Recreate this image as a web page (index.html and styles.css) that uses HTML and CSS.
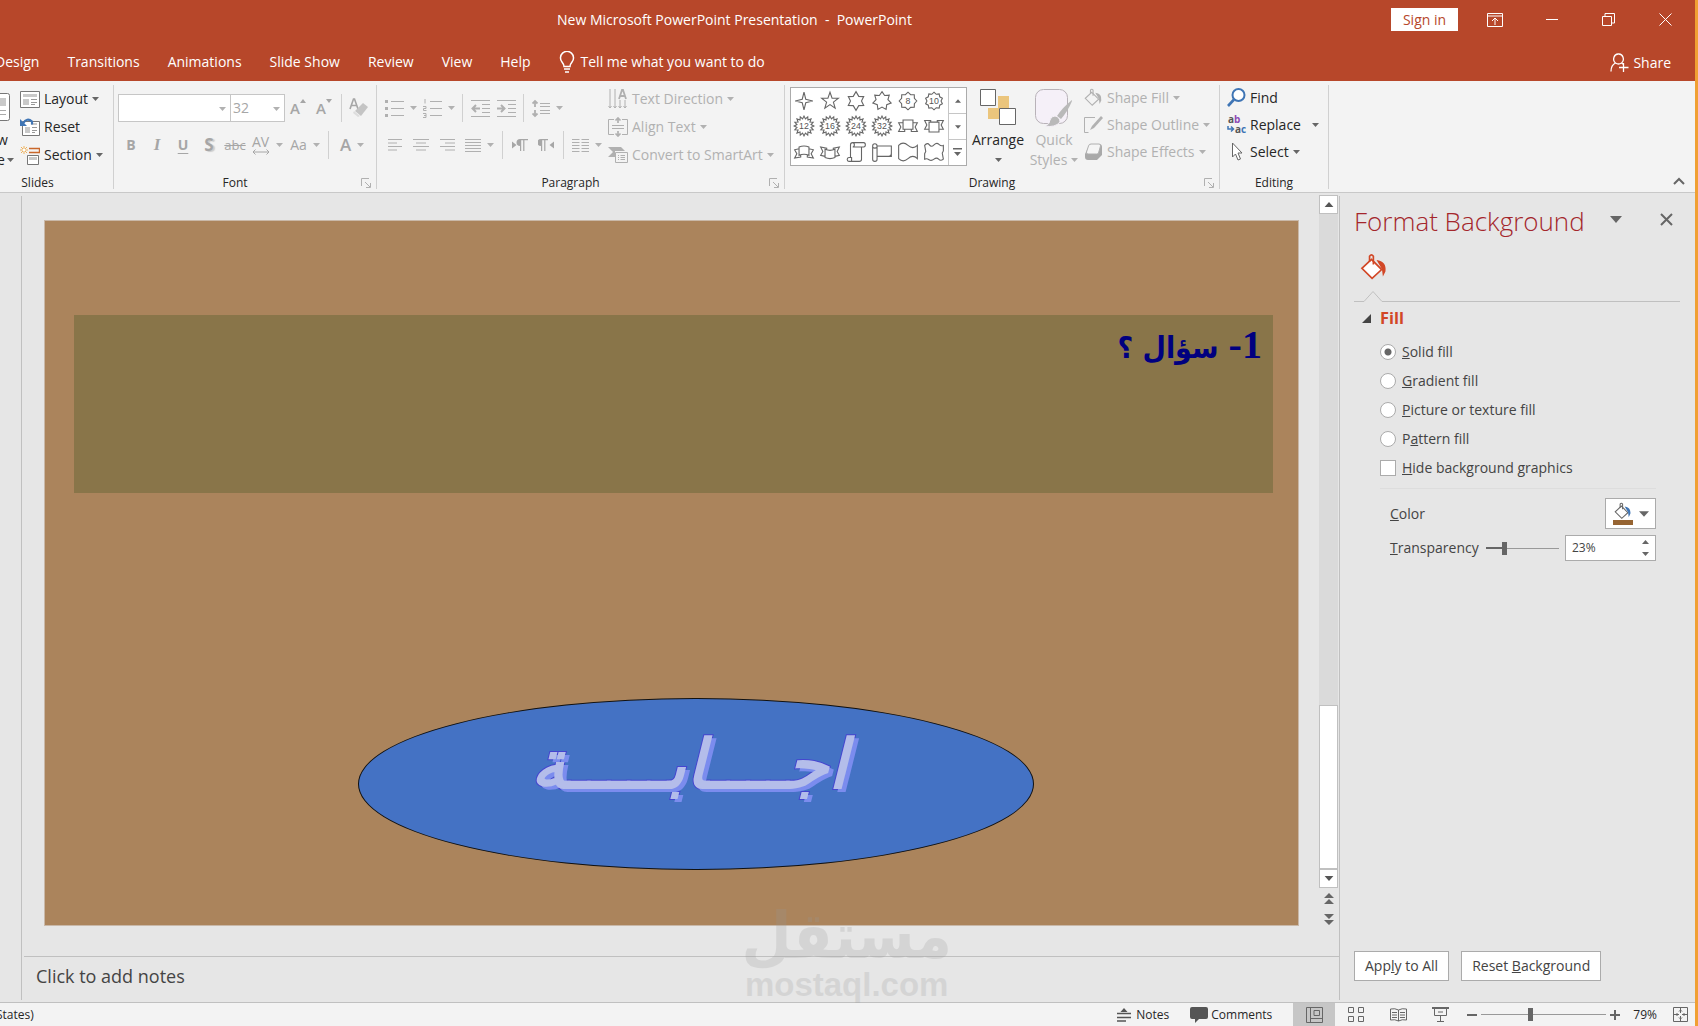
FILE: index.html
```html
<!DOCTYPE html>
<html lang="en">
<head>
<meta charset="utf-8">
<title>New Microsoft PowerPoint Presentation - PowerPoint</title>
<link rel="stylesheet" href="styles.css">
</head>
<body>
<svg class="defs" aria-hidden="true">
  <symbol id="caret" viewBox="0 0 7 4"><path d="M0 0h7L3.500 4z" fill="currentColor"/></symbol>
  <symbol id="launcher" viewBox="0 0 10 10"><path d="M.5 8V.5H8M4 4l5 5M9.500 5v4.500H5" fill="none" stroke="currentColor"/></symbol>
  <symbol id="bucket" viewBox="0 0 22 22"><path d="M9 5l8 8-7.500 7L1.500 12z" fill="var(--can, none)" stroke="currentColor" stroke-width="1.300"/><path d="M7.500 7V2.500q1.500-2 3 0V9" fill="none" stroke="currentColor" stroke-width="1.300"/><path d="M13 5.500q8 1 7 9l-2 4-.8-6z" fill="var(--paint, currentColor)"/></symbol>
  <symbol id="burst" viewBox="-10 -10 20 20"><path d="M9 0L6.400 1.300 8.300 3.400 5.400 3.600 6.400 6.400 3.600 5.400 3.400 8.300 1.300 6.400 0 9-1.300 6.400-3.400 8.300-3.600 5.400-6.400 6.400-5.400 3.600-8.300 3.400-6.400 1.300-9 0-6.400-1.300-8.300-3.400-5.400-3.600-6.400-6.400-3.600-5.400-3.400-8.300-1.300-6.400 0-9 1.300-6.400 3.400-8.300 3.600-5.400 6.400-6.400 5.400-3.600 8.300-3.400 6.400-1.300z"/></symbol>
</svg>

<div class="window">
  <header class="titlebar">
    <h1 class="doc-title">New Microsoft PowerPoint Presentation&nbsp; -&nbsp; PowerPoint</h1>
    <div class="window-tools">
      <button class="sign-in">Sign in</button>
      <button class="win-btn" aria-label="Ribbon display options"><svg width="16" height="14" viewBox="0 0 16 14"><path d="M.5.500h15v13H.500zM.5 3h15M8 12V5.500M5 8l3-3 3 3"/></svg></button>
      <button class="win-btn" aria-label="Minimize"><svg width="12" height="14" viewBox="0 0 12 14"><path d="M0 6.500h12"/></svg></button>
      <button class="win-btn" aria-label="Restore"><svg width="13" height="13" viewBox="0 0 13 13"><path d="M.5 3.500h9v9h-9zM3 3V.500h9.500V10H10"/></svg></button>
      <button class="win-btn" aria-label="Close"><svg width="13" height="13" viewBox="0 0 13 13"><path d="M.5.500l12 12M12.500.500l-12 12"/></svg></button>
    </div>
  </header>

  <nav class="tabs">
    <a href="#" class="tab tab-cut">Design</a>
    <a href="#" class="tab">Transitions</a>
    <a href="#" class="tab">Animations</a>
    <a href="#" class="tab">Slide Show</a>
    <a href="#" class="tab">Review</a>
    <a href="#" class="tab">View</a>
    <a href="#" class="tab">Help</a>
    <a href="#" class="tab tell-me"><svg width="16" height="23" viewBox="0 0 16 23"><path d="M5 15.500q0-2-2-4.500a6.500 6.500 0 1 1 10 0q-2 2.500-2 4.500zM5 18h6M6 21h4" fill="none" stroke="currentColor" stroke-width="1.500"/></svg>Tell me what you want to do</a>
    <button class="share"><svg width="19" height="20" viewBox="0 0 19 20"><path d="M8.500 1a4.500 5 0 0 1 3 9q-3 2-6 0a4.500 5 0 0 1 3-9M5.500 10Q1 12 1 18.500M11.500 10l2 1.500M13.500 10v9M9 14.500h9.500" fill="none" stroke="currentColor" stroke-width="1.300"/></svg>Share</button>
  </nav>

  <section class="ribbon" aria-label="Ribbon">
    <div class="group group-slides">
      <div class="group-body">
        <button class="new-slide" aria-label="New Slide"><svg width="10" height="28" viewBox="0 0 10 28"><path d="M0 .5h7.500q2 0 2 2v23q0 2-2 2H0" fill="#fff" stroke="#777"/><path d="M0 5h6v8H0z" fill="#c9c9c9"/><path d="M0 17.500h6M0 21.500h6" stroke="#aaa"/></svg><span>w</span><span>e<svg class="caret"><use href="#caret"/></svg></span></button>
        <div class="stack">
          <button class="cmd"><svg width="20" height="17" viewBox="0 0 20 17"><path d="M.5.500h19v16H.500z" fill="#fff" stroke="#777"/><path d="M3 3h14v3H3zM3 8h6v6H3z" fill="#c9c9c9"/><path d="M11 8.500h6M11 11.500h6M11 13.500h4" stroke="#999"/></svg>Layout<svg class="caret"><use href="#caret"/></svg></button>
          <button class="cmd"><svg width="20" height="18" viewBox="0 0 20 18"><path d="M2.500 3.500h17v14h-17z" fill="#fff" stroke="#777"/><path d="M5 9h5v6H5zM11 5h6v2h-6z" fill="#c9c9c9"/><path d="M12 9.500h5M12 12.500h5M12 14.500h3" stroke="#999"/><path d="M3 5.500Q7-1 12 3.500v3" fill="none" stroke="#3f75b5" stroke-width="2.200"/><path d="M0 1v7h7z" fill="#3f75b5"/></svg>Reset</button>
          <button class="cmd"><svg width="20" height="19" viewBox="0 0 20 19"><path d="M9 2.500h10.500v4H9" fill="none" stroke="#c9672b" stroke-width="1.400"/><path d="M4 0v8M0 4h8M1 1l6 6M7 1L1 7" stroke="#efb25a"/><circle cx="4" cy="4" r="1.300" fill="#fff"/><path d="M7.500 9.500h11v9h-11z" fill="#fff" stroke="#777"/><path d="M9 11h8v3H9z" fill="#c9c9c9"/></svg>Section<svg class="caret"><use href="#caret"/></svg></button>
        </div>
      </div>
      <div class="group-label">Slides</div>
    </div>

    <div class="group group-font">
      <div class="group-body rows">
        <div class="row">
          <label class="combo combo-name"><select aria-label="Font"><option></option></select><svg class="caret"><use href="#caret"/></svg></label>
          <label class="combo combo-size"><select aria-label="Font size"><option>32</option></select><svg class="caret"><use href="#caret"/></svg></label>
          <button class="tool grow" aria-label="Increase font size"><span>A</span><svg width="6" height="4" viewBox="0 0 6 4"><path d="M0 4l3-4 3 4z"/></svg></button>
          <button class="tool grow" aria-label="Decrease font size"><span>A</span><svg width="6" height="4" viewBox="0 0 6 4"><path d="M0 0h6L3 4z"/></svg></button>
          <i class="sep"></i>
          <button class="tool" aria-label="Clear formatting"><svg width="20" height="20" viewBox="0 0 20 20"><path d="M1 11L4.500 1h1L9 11M2.500 7.500h5" fill="none" stroke="#a6a6a6" stroke-width="1.600"/><path d="M14 5l5 4-7 9-6-5z" fill="#c4c4c4"/><path d="M5 13l6 5-2 1-5-4z" fill="#ddd"/></svg></button>
        </div>
        <div class="row">
          <button class="tool"><b>B</b></button>
          <button class="tool"><i class="serif-i">I</i></button>
          <button class="tool"><b class="under">U</b></button>
          <button class="tool"><b class="shadow">S</b></button>
          <button class="tool"><s>abc</s></button>
          <button class="split spacing"><span>AV<svg width="18" height="6" viewBox="0 0 18 6"><path d="M1 3h16M3.500.500L1 3l2.500 2.500M14.500.500L17 3l-2.500 2.500" fill="none" stroke="currentColor"/></svg></span><svg class="caret"><use href="#caret"/></svg></button>
          <button class="split"><span>Aa</span><svg class="caret"><use href="#caret"/></svg></button>
          <i class="sep"></i>
          <button class="split color"><b>A</b><svg class="caret"><use href="#caret"/></svg></button>
        </div>
      </div>
      <div class="group-label">Font<button class="launch" aria-label="Font settings"><svg width="10" height="10"><use href="#launcher"/></svg></button></div>
    </div>

    <div class="group group-paragraph">
      <div class="group-body">
        <div class="rows">
          <div class="row">
            <button class="split" aria-label="Bullets"><svg class="g" width="19" height="19" viewBox="0 0 19 19"><path d="M6 2.500h13M6 9.500h13M6 16.500h13"/><path d="M0 2.500h3M0 9.500h3M0 16.500h3" stroke-width="3"/></svg><svg class="caret"><use href="#caret"/></svg></button>
            <button class="split" aria-label="Numbering"><svg class="g" width="19" height="19" viewBox="0 0 19 19"><path d="M7 2.500h12M7 9.500h12M7 16.500h12M2 0v4.500M0 7.500h3v2H.500v2H3.500M0 14.500h3v4H0M1 16.500h2"/></svg><svg class="caret"><use href="#caret"/></svg></button>
            <i class="sep"></i>
            <button class="tool" aria-label="Decrease list level"><svg class="g" width="19" height="17" viewBox="0 0 19 17"><path d="M0 .5h19M11 4.500h8M11 8.500h8M11 12.500h8M0 16.500h19"/><path d="M9 8.500H2M5 5L1.500 8.500 5 12" stroke-width="2"/></svg></button>
            <button class="tool" aria-label="Increase list level"><svg class="g" width="19" height="17" viewBox="0 0 19 17"><path d="M0 .5h19M11 4.500h8M11 8.500h8M11 12.500h8M0 16.500h19"/><path d="M0 8.500h7M4 5l3.500 3.500L4 12" stroke-width="2"/></svg></button>
            <i class="sep"></i>
            <button class="split" aria-label="Line spacing"><svg class="g" width="18" height="19" viewBox="0 0 18 19"><path d="M8 4.500h10M8 7.500h10M8 11.500h10M8 14.500h10"/><path d="M3 2v6M3 11v6M.5 4.500L3 2l2.500 2.500M.5 14.500L3 17l2.500-2.500" stroke-width="1.800"/></svg><svg class="caret"><use href="#caret"/></svg></button>
          </div>
          <div class="row">
            <button class="tool" aria-label="Align left"><svg class="g" width="15" height="12" viewBox="0 0 15 12"><path d="M0 .5h14M0 4h9M0 7.500h14M0 11h9"/></svg></button>
            <button class="tool" aria-label="Center"><svg class="g" width="16" height="12" viewBox="0 0 16 12"><path d="M0 .5h16M3 4h10M0 7.500h16M3 11h10"/></svg></button>
            <button class="tool" aria-label="Align right"><svg class="g" width="15" height="12" viewBox="0 0 15 12"><path d="M0 .5h15M5 4h10M0 7.500h15M5 11h10"/></svg></button>
            <button class="split" aria-label="Justify"><svg class="g" width="16" height="13" viewBox="0 0 16 13"><path d="M0 .5h16M0 3.500h16M0 6.500h16M0 9.500h16M0 12.500h16"/></svg><svg class="caret"><use href="#caret"/></svg></button>
            <i class="sep"></i>
            <button class="tool" aria-label="Left to right"><svg width="16" height="13" viewBox="0 0 16 13"><path d="M0 2.500v7L4.500 6zM8 0a3 3 0 0 0 0 7v5h1.200V1.200h2V12h1.200V1.200H16V0z" fill="currentColor"/></svg></button>
            <button class="tool" aria-label="Right to left"><svg width="16" height="13" viewBox="0 0 16 13"><path d="M16 2.500v7L11.500 6zM3 0a3 3 0 0 0 0 7v5h1.200V1.200h2V12h1.200V1.200H10V0z" fill="currentColor"/></svg></button>
            <i class="sep"></i>
            <button class="split" aria-label="Columns"><svg class="g" width="17" height="13" viewBox="0 0 17 13"><path d="M0 .5h7.500M0 3.500h7.500M0 6.500h7.500M0 9.500h7.500M0 12.500h7.500M9.500.500H17M9.500 3.500H17M9.500 6.500H17M9.500 9.500H17M9.500 12.500H17"/></svg><svg class="caret"><use href="#caret"/></svg></button>
          </div>
        </div>
        <div class="stack">
          <button class="cmd off"><svg class="g" width="20" height="20" viewBox="0 0 20 20"><path d="M2 0v19M7 0v19M12 11v8M17 11v8M.5 17L2 19l1.500-2M5.500 17L7 19l1.500-2M10.500 17l1.500 2 1.500-2M15.500 17l1.500 2 1.500-2"/><path d="M11 10l3-9h1l3 9M12 7h5" stroke-width="1.800"/></svg>Text Direction<svg class="caret"><use href="#caret"/></svg></button>
          <button class="cmd off"><svg class="g" width="20" height="20" viewBox="0 0 20 20"><path d="M6 2.500H.500v15H6M14 2.500h5.500v15H14M4 8.500h12M4 11.500h12"/><path d="M10 6V1M7.500 3.500L10 1l2.500 2.500M10 14v5M7.500 16.500L10 19l2.500-2.500" stroke-width="1.700"/></svg>Align Text<svg class="caret"><use href="#caret"/></svg></button>
          <button class="cmd off"><svg class="g" width="20" height="16" viewBox="0 0 20 16"><path d="M0 0h13l4 4-4 0H7v6H0l5-5z" fill="#b0b0b0" stroke="none"/><path d="M7.500 5.500h12v10h-12z" fill="#f3f3f3"/><path d="M10 8.500h1M12.500 8.500H17M10 10.500h1M12.500 10.500H17M10 12.500h1M12.500 12.500H17"/></svg>Convert to SmartArt<svg class="caret"><use href="#caret"/></svg></button>
        </div>
      </div>
      <div class="group-label">Paragraph<button class="launch" aria-label="Paragraph settings"><svg width="10" height="10"><use href="#launcher"/></svg></button></div>
    </div>

    <div class="group group-drawing">
      <div class="group-body">
        <div class="gallery">
          <div class="shapes">
            <svg viewBox="-10 -10 20 20"><path d="M0-8L1.600-1.600 8 0 1.600 1.600 0 8-1.600 1.600-8 0-1.600-1.600z"/></svg>
            <svg viewBox="-10 -10 20 20"><path d="M0-8L1.900-2.600 7.600-2.500 3.100 1 4.700 6.500 0 3.300-4.700 6.500-3.100 1-7.600-2.500-1.900-2.600z"/></svg>
            <svg viewBox="-10 -10 20 20"><path d="M0-8.500L2.500-4.200 7-4 5 0 7 4 2.500 4.200 0 8.500-2.500 4.200-7 4-5 0-7-4-2.500-4.200z"/></svg>
            <svg viewBox="-10 -10 20 20"><path d="M0-8.500L2.400-5 6.600-5.300 5.400-1.200 8.300 1.900 4.300 3.400 3.700 7.700 0 5.500-3.700 7.700-4.300 3.400-8.300 1.900-5.400-1.200-6.600-5.300-2.400-5z"/></svg>
            <svg viewBox="-10 -10 20 20"><path d="M8 0L5.800 2.400 5.700 5.700 2.400 5.800 0 8-2.400 5.800-5.700 5.700-5.800 2.400-8 0-5.800-2.400-5.700-5.700-2.400-5.800 0-8 2.400-5.800 5.700-5.700 5.800-2.400z"/><text y="3">8</text></svg>
            <svg viewBox="-10 -10 20 20"><path d="M0-8L2-6.100 4.700-6.500 5.200-3.800 7.600-2.500 6.400 0 7.600 2.500 5.200 3.800 4.700 6.500 2 6.100 0 8-2 6.100-4.700 6.500-5.200 3.800-7.600 2.500-6.400 0-7.600-2.500-5.200-3.800-4.700-6.500-2-6.100z"/><text y="3">10</text></svg>
            <svg viewBox="-10 -10 20 20"><use href="#burst" x="-10" y="-10" width="20" height="20"/><text y="3">12</text></svg>
            <svg viewBox="-10 -10 20 20"><use href="#burst" x="-10" y="-10" width="20" height="20"/><text y="3">16</text></svg>
            <svg viewBox="-10 -10 20 20"><use href="#burst" x="-10" y="-10" width="20" height="20"/><text y="3">24</text></svg>
            <svg viewBox="-10 -10 20 20"><use href="#burst" x="-10" y="-10" width="20" height="20"/><text y="3">32</text></svg>
            <svg viewBox="-10 -10 20 20"><path d="M-4.500-5.500h9V3h-9zM-4.500-3h-4l2 4-2 4h5.500V3M4.500-3h4l-2 4 2 4H3V3"/></svg>
            <svg viewBox="-10 -10 20 20"><path d="M-4.500-3.500h9v9h-9zM-4.500 3h-4l2-4-2-4h5.500v1.500M4.500 3h4l-2-4 2-4H3v1.500"/></svg>
            <svg viewBox="-10 -10 20 20"><path d="M-4.500-4.500q4.500-2 9 0V3q-4.500-2-9 0zM-4.500-3l-4 1 2 3.500-2 4 5.500-1V2.500M4.500-3l4 1-2 3.500 2 4L3 4.500V2.500"/></svg>
            <svg viewBox="-10 -10 20 20"><path d="M-4.500-2.500q4.500 2 9 0V5q-4.500 2-9 0zM-4.500 4l-4-1 2-3.500-2-4 5.500 1V-2M4.500 4l4-1-2-3.500 2-4L3-3.500V-2"/></svg>
            <svg viewBox="-10 -10 20 20"><path d="M-5 5V-6.500q0-2 2-2H7q1.500 0 1.500 2T7-4.500H5V6.500q0 2-2 2h-9.500q-1.500 0-1.500-1.700T-6.500 5H-4v3M-3-8.500q1.500 0 1.500 2T-3-4.500h8"/></svg>
            <svg viewBox="-10 -10 20 20"><path d="M-4.500-5.500H8.500V4H-4.500M-8.500-5.500q0-2 2-2t2 2v12q0 2-2 2t-2-2zM-8.500-5q0 1.500 2 1.500t2-1.500M6 4q2.500 0 2.500-3"/></svg>
            <svg viewBox="-10 -10 20 20"><path d="M-8.500-6q4-4 8.500 0t8.500 0V6Q4.500 2 0 6t-8.500 0z"/></svg>
            <svg viewBox="-10 -10 20 20"><path d="M-8.500-6Q-6-9-4.200-6.500T0-6.500 4.500-7 8.500-6V-1l-1 2 1 5.500Q6 8.500 4.200 6.500T0 6.500-4.500 7-8.500 6.500v-5l1-2z"/></svg>
          </div>
          <div class="gallery-nav">
            <button aria-label="Previous row"><svg class="caret flip"><use href="#caret"/></svg></button>
            <button aria-label="Next row"><svg class="caret"><use href="#caret"/></svg></button>
            <button aria-label="More shapes"><svg width="9" height="9" viewBox="0 0 9 9"><path d="M0 0h9v1.500H0zM1 4h7L4.500 8z" fill="currentColor"/></svg></button>
          </div>
        </div>
        <button class="big"><svg width="36" height="36" viewBox="0 0 36 36"><path d="M18 7h11v12H18zM8 19h11v11H8z" fill="#ebc57c"/><path d="M.5.500h15v16H.500zM19.500 19.500h16v16h-16z" fill="#fff" stroke="#666"/></svg><span>Arrange</span><svg class="caret"><use href="#caret"/></svg></button>
        <button class="big off quick"><svg width="38" height="38" viewBox="0 0 38 38"><rect x=".5" y=".5" width="32" height="34" rx="8" fill="#f5f0f8" stroke="#b8b2b8"/><path d="M37 11q-10 8-15 16l4 3q7-8 11-18z" fill="#b9b9b9"/><path d="M20 27q5 1 5 6-5 6-15 4 5-2 5-6 1-4 5-4z" fill="#b9b9b9" stroke="#f5f0f8"/></svg><span>Quick</span><span>Styles<svg class="caret"><use href="#caret"/></svg></span></button>
        <div class="stack shape-cmds">
          <button class="cmd off"><svg width="19" height="19"><use href="#bucket"/></svg>Shape Fill<svg class="caret"><use href="#caret"/></svg></button>
          <button class="cmd off"><svg width="19" height="17" viewBox="0 0 19 17"><path d="M11 1.500H.500v15h4" fill="none" stroke="currentColor"/><path d="M17 0l2 2-9 10-4 2 2-4z" fill="currentColor"/></svg>Shape Outline<svg class="caret"><use href="#caret"/></svg></button>
          <button class="cmd off"><svg width="19" height="18" viewBox="0 0 19 18"><path d="M6 1h9q3 0 3 3v8l-5 5H4q-3 0-3-3v-3z" fill="#a9a9a9"/><path d="M7 1h8q2 0 1.500 2l-2 7q-.5 1-2 1H4q-2 0-1.500-2l2-6Q5 1 7 1z" fill="#f5f5f5" stroke="#b0b0b0"/></svg>Shape Effects<svg class="caret"><use href="#caret"/></svg></button>
        </div>
      </div>
      <div class="group-label">Drawing<button class="launch" aria-label="Drawing settings"><svg width="10" height="10"><use href="#launcher"/></svg></button></div>
    </div>

    <div class="group group-editing">
      <div class="group-body">
        <div class="stack">
          <button class="cmd"><svg width="19" height="19" viewBox="0 0 19 19"><circle cx="11.500" cy="7" r="6" fill="#fff" stroke="#3f75b5" stroke-width="2"/><path d="M7 11.500L1 18" stroke="#3f75b5" stroke-width="2.600"/></svg>Find</button>
          <button class="cmd replace"><svg width="20" height="20" viewBox="0 0 20 20"><text x="1" y="8" fill="#555">a<tspan fill="#8d4bb5">b</tspan></text><text x="8" y="18" fill="#555">a<tspan fill="#3f75b5">c</tspan></text><path d="M1 11v3h5M4 11.500L6.500 14 4 16.500" fill="none" stroke="#3f75b5" stroke-width="1.500"/></svg>Replace<svg class="caret"><use href="#caret"/></svg></button>
          <button class="cmd"><svg width="19" height="19" viewBox="0 0 19 19"><path d="M5.500 1v14l3-3 2.500 6 2.500-1-2.500-6h4z" fill="#fff" stroke="#666"/></svg>Select<svg class="caret"><use href="#caret"/></svg></button>
        </div>
      </div>
      <div class="group-label">Editing</div>
    </div>
    <button class="collapse" aria-label="Collapse the ribbon"><svg width="12" height="8" viewBox="0 0 12 8"><path d="M1 7l5-5 5 5" fill="none" stroke="#666" stroke-width="2"/></svg></button>
  </section>

  <main class="workspace">
    <aside class="thumbs"></aside>
    <div class="editor">
      <div class="stage">
        <div class="slide">
          <div class="question" dir="rtl" lang="ar">1- <span>سؤال ؟</span></div>
          <div class="answer" dir="rtl" lang="ar"><span>اجــــابـــــة</span></div>
        </div>
        <div class="scroll">
          <button class="scroll-btn" aria-label="Scroll up"><svg width="10" height="5" viewBox="0 0 7 4"><path d="M0 4h7L3.500 0z" fill="#555"/></svg></button>
          <div class="track"><div class="thumb"></div></div>
          <button class="scroll-btn" aria-label="Scroll down"><svg width="10" height="5"><use href="#caret"/></svg></button>
          <button class="page-btn" aria-label="Previous slide"><svg width="10" height="11" viewBox="0 0 10 11"><path d="M0 5l5-5 5 5zM0 11l5-5 5 5z" fill="#666"/></svg></button>
          <button class="page-btn" aria-label="Next slide"><svg width="10" height="11" viewBox="0 0 10 11"><path d="M0 0h10L5 5zM0 6h10l-5 5z" fill="#666"/></svg></button>
        </div>
      </div>
      <div class="notes">Click to add notes</div>
      <div class="watermark"><span class="mark-ar" lang="ar" dir="rtl">مستقل</span><span class="mark-en">mostaql.com</span></div>
    </div>

    <aside class="pane">
      <div class="pane-head">
        <h2>Format Background</h2>
        <button class="pane-menu" aria-label="Task pane options"><svg width="12" height="7"><use href="#caret"/></svg></button>
        <button class="pane-close" aria-label="Close"><svg width="13" height="13" viewBox="0 0 13 13"><path d="M1 1l11 11M12 1L1 12" stroke="#666" stroke-width="2"/></svg></button>
      </div>
      <button class="pane-tab" aria-label="Fill"><svg width="28" height="28"><use href="#bucket"/></svg></button>
      <div class="pane-rule"><i></i><svg width="18" height="11" viewBox="0 0 18 11"><path d="M0 10.500L9 .5l9 10" fill="none" stroke="#c0c0c0"/></svg><i></i></div>
      <h3><svg width="9" height="9" viewBox="0 0 9 9"><path d="M9 0v9H0z" fill="#444"/></svg>Fill</h3>
      <form class="fill-form">
        <label class="opt"><input type="radio" name="fill" checked><span><u>S</u>olid fill</span></label>
        <label class="opt"><input type="radio" name="fill"><span><u>G</u>radient fill</span></label>
        <label class="opt"><input type="radio" name="fill"><span><u>P</u>icture or texture fill</span></label>
        <label class="opt"><input type="radio" name="fill"><span>P<u>a</u>ttern fill</span></label>
        <label class="opt"><input type="checkbox"><span><u>H</u>ide background graphics</span></label>
        <div class="field color-field"><label for="color"><u>C</u>olor</label>
          <button type="button" id="color" class="color-btn" aria-label="Color"><span><svg width="20" height="18" viewBox="0 0 22 22"><use href="#bucket"/></svg></span><svg width="10" height="6"><use href="#caret"/></svg></button></div>
        <div class="field"><label for="alpha"><u>T</u>ransparency</label>
          <input type="range" id="alpha" min="0" max="100" value="23">
          <span class="spin"><input type="text" value="23%" aria-label="Transparency value"><span><button type="button" aria-label="Increase"><svg class="caret flip"><use href="#caret"/></svg></button><button type="button" aria-label="Decrease"><svg class="caret"><use href="#caret"/></svg></button></span></span></div>
      </form>
      <div class="pane-actions"><button>App<u>l</u>y to All</button><button>Reset <u>B</u>ackground</button></div>
    </aside>
  </main>

  <footer class="status">
    <span class="language">States)</span>
    <button class="status-text"><svg width="14" height="15" viewBox="0 0 14 15"><path d="M3.500 5L7 1l3.500 4z" fill="#555"/><path d="M0 6.500h14M0 10.500h14M0 14h9" stroke="#555" stroke-width="1.300"/></svg>Notes</button>
    <button class="status-text comments"><svg width="18" height="16" viewBox="0 0 18 16"><path d="M2 0h14q2 0 2 2v8q0 2-2 2H9l-4 4v-4H2q-2 0-2-2V2q0-2 2-2z" fill="#555"/></svg>Comments</button>
    <button class="view active" aria-label="Normal"><svg width="17" height="16" viewBox="0 0 17 16"><path d="M.5.500h16v15H.500zM4.500.500v15M4.500 11.500h12M8 3.500h5.500v5H8z"/></svg></button>
    <button class="view" aria-label="Slide sorter"><svg width="16" height="15" viewBox="0 0 16 15"><path d="M.5.500h5v5h-5zM10.500.500h5v5h-5zM.5 9.500h5v5h-5zM10.500 9.500h5v5h-5z"/></svg></button>
    <button class="view" aria-label="Reading view"><svg width="17" height="14" viewBox="0 0 17 14"><path d="M8.500 2Q5 0 .5 1v11q4.500-1 8 1 3.500-2 8-1V1Q12 0 8.500 2v11M2 4.500h5M2 7h5M2 9.500h5M10 4.500h5M10 7h5M10 9.500h5"/></svg></button>
    <button class="view" aria-label="Slide show"><svg width="17" height="15" viewBox="0 0 17 15"><path d="M0 1h17" stroke-width="2"/><path d="M2.500 1v7.500h12V1M6 5h5M8.500 8.500V14M5 14.500h7"/></svg></button>
    <button class="zoom-step" aria-label="Zoom out"><svg width="10" height="10" viewBox="0 0 10 10"><path d="M0 5h10"/></svg></button>
    <input class="zoom" type="range" min="0" max="100" value="39" aria-label="Zoom">
    <button class="zoom-step" aria-label="Zoom in"><svg width="10" height="10" viewBox="0 0 10 10"><path d="M0 5h10M5 0v10"/></svg></button>
    <button class="percent">79%</button>
    <button class="fit" aria-label="Fit slide to window"><svg width="15" height="15" viewBox="0 0 15 15"><path d="M.5.500h14v14H.500zM7.500 1v5M7.500 9v5M1 7.500h5M9 7.500h5M6 4.500L7.500 3 9 4.500M6 10.500L7.500 12 9 10.500M4.500 6L3 7.500 4.500 9M10.500 6L12 7.500 10.500 9"/></svg></button>
  </footer>
</div>
</body>
</html>
```

FILE: styles.css
```css
* { box-sizing: border-box; }
body {
  margin: 0;
  font: 14px/20px "Open Sans", "Noto Sans", sans-serif;
  color: #262626;
  background: #e6e6e6;
}
button, input, select { font: inherit; color: inherit; }
button { padding: 0; border: 0; background: none; }
svg { flex: none; display: block; }
h1, h2, h3 { margin: 0; font-weight: 400; }
.defs { display: none; }

.window {
  display: flex;
  flex-direction: column;
  height: 100vh;
  overflow: hidden;
  border-right: 3px solid #f0a033;
}

/* Title bar and tabs */
.titlebar {
  display: grid;
  grid-template-columns: 1fr;
  align-items: center;
  height: 39px;
  flex: none;
  background: #b7472a;
  color: #fff;
}
.titlebar > * { grid-area: 1 / 1; }
.doc-title { font-size: 14px; text-align: center; padding-right: 226px; }
.window-tools { justify-self: end; display: flex; align-items: center; }
.sign-in { width: 67px; height: 23px; margin-right: 8px; background: #fff; color: #b7472a; }
.win-btn { display: grid; place-items: center; width: 57px; height: 38px; }
.win-btn:last-child { margin-right: 1px; }
.win-btn svg { fill: none; stroke: #fff; }
.tabs { display: flex; flex: none; align-items: center; height: 42px; gap: 28px; padding-top: 4px; background: #b7472a; color: #fff; }
.tab { color: inherit; text-decoration: none; white-space: nowrap; }
.tab-cut { margin-left: -5px; }
.tell-me { display: flex; align-items: center; gap: 6px; }
.share { display: flex; align-items: center; gap: 4px; margin: 2px 24px 0 auto; }

/* Ribbon */
.ribbon { display: flex; flex: none; height: 112px; padding: 4px 0 3px; background: #f3f3f3; border-bottom: 1px solid #c8c8c8; }
.group { display: flex; flex-direction: column; flex: none; border-right: 1px solid #d0d0d0; }
.group-slides { width: 114px; }
.group-font { width: 263px; }
.group-paragraph { width: 408px; }
.group-drawing { width: 435px; }
.group-editing { width: 109px; }
.group-body { display: flex; flex: 1; min-height: 0; }
.group-label { position: relative; height: 14px; line-height: 16px; padding-right: 20px; font-size: 12px; text-align: center; }
.group-slides .group-label { padding-right: 38px; }
.group-editing .group-label { padding-right: 0; }
.launch { position: absolute; right: 5px; top: 3px; color: #b0b0b0; }
.caret { width: 7px; height: 4px; color: #666; }
.flip { transform: rotate(180deg); }
.off, .off .caret { color: #b1b1b1; }
.stack { display: flex; flex-direction: column; }
.cmd { display: flex; align-items: center; gap: 4px; height: 28px; white-space: nowrap; }
.new-slide { width: 20px; padding-top: 8px; display: flex; flex-direction: column; align-items: flex-start; }
.new-slide span { display: flex; align-items: center; gap: 2px; margin-left: -3px; }
.new-slide span:first-of-type { margin-top: 9px; }

.rows { display: flex; flex-direction: column; gap: 11px; padding-top: 10px; }
.row { display: flex; align-items: center; height: 26px; color: #a6a6a6; }
.row .caret { color: #b1b1b1; }
.group-font .rows { padding-left: 4px; }
.combo { position: relative; height: 28px; border: 1px solid #c6c6c6; background: #fff; }
.combo select { width: 100%; height: 100%; padding: 0 2px; border: 0; background: none; appearance: none; }
.combo .caret { position: absolute; right: 4px; top: 12px; pointer-events: none; }
.combo-name { width: 113px; }
.combo-size { width: 55px; margin-left: -1px; }
.tool { display: flex; align-items: center; justify-content: center; width: 26px; height: 26px; flex: none; }
.grow { align-items: flex-start; font-weight: 600; }
.grow span { line-height: 26px; font-size: 15px; }
.grow svg { fill: #a6a6a6; margin-top: 4px; }
.split { display: flex; align-items: center; justify-content: center; gap: 6px; width: 38px; height: 26px; flex: none; }
.sep { width: 1px; height: 28px; background: #d0d0d0; margin: 0 4px; }
.serif-i { font: italic bold 17px "Liberation Serif", serif; }
.under { text-decoration: underline; text-underline-offset: 3px; }
.shadow { font-size: 17px; text-shadow: 2px 1px 1px #ccc; }
.tool s { font-size: 13px; }
.spacing span { line-height: 14px; }
.color b { font-size: 17px; font-weight: 600; }
.g { fill: none; stroke: #b0b0b0; }
.group-paragraph .rows { width: 231px; padding-left: 5px; }

.gallery { display: flex; width: 177px; height: 79px; margin: 2px 0 0 5px; background: #fff; border: 1px solid #ababab; }
.shapes { display: grid; grid-template-columns: repeat(6, 26px); flex: 1; }
.shapes svg { width: 22px; height: 22px; place-self: center; fill: none; stroke: #666; }
.shapes text { font: 8px "Liberation Sans", sans-serif; text-anchor: middle; fill: #555; stroke: none; }
.gallery-nav { display: flex; flex-direction: column; width: 18px; border-left: 1px solid #c6c6c6; }
.gallery-nav button { display: grid; place-items: center; flex: 1; color: #666; }
.gallery-nav button + button { border-top: 1px solid #c6c6c6; }
.gallery-nav .caret { width: 6px; }
.big { display: flex; flex-direction: column; align-items: center; width: 62px; padding-top: 4px; }
.big > span { display: flex; align-items: center; gap: 4px; }
.big > svg + span { margin-top: 5px; }
.big > .caret { margin-top: 8px; }
.quick { width: 50px; }
.quick > svg + span { margin-top: 3px; }
.shape-cmds { margin-left: 5px; }
.group-drawing .cmd, .group-editing .cmd { height: 27px; }
.group-drawing .stack, .group-editing .stack { margin-top: -1px; }
.group-editing .stack { padding-left: 7px; }
.replace { gap: 3px; }
.replace > .caret { margin-left: 8px; }
.replace text { font: bold 10px "Open Sans", sans-serif; }
.collapse { margin: auto 10px 4px auto; }

/* Workspace */
.workspace { display: flex; flex: 1; min-height: 0; background: #e6e6e6; }
.thumbs { width: 22px; flex: none; margin: 3px 0 2px; border-right: 1px solid #c0c0c0; }
.editor { position: relative; display: flex; flex-direction: column; flex: 1; min-width: 0; }
.stage { display: flex; flex: 1; min-height: 0; padding: 2px 1px 0 22px; gap: 20px; }
.slide { position: relative; flex: 1; margin: 25px 0 30px; background: #ab845c; border: 1px solid #c9b8a8; }
.question {
  position: absolute;
  left: 2.3%; top: 13.3%; width: 95.7%; height: 25.4%;
  padding: 6px 11px;
  background: #897549;
  color: #000080;
  font: bold 40px/48px "Liberation Serif", serif;
}
.question span { font: bold 30px/48px "DejaVu Sans Condensed", "DejaVu Sans", sans-serif; }
.answer {
  position: absolute;
  left: 25%; top: 67.7%; width: 53.9%; height: 24.5%;
  display: flex; justify-content: center;
  padding-right: 14px;
  border: 1px solid #111;
  border-radius: 50%;
  background: #4472c4;
}
.answer span {
  font: italic bold 68px/132px "DejaVu Sans", sans-serif;
  color: #b4bdea;
  -webkit-text-stroke: 2px #4545cf;
  paint-order: stroke fill;
  text-shadow: 4px 3px 0 #7b8cee;
}
.scroll { width: 19px; flex: none; display: flex; flex-direction: column; padding-bottom: 26px; }
.scroll-btn, .page-btn { display: grid; place-items: center; flex: none; height: 19px; }
.scroll-btn { background: #fff; border: 1px solid #c0c0c0; color: #555; }
.page-btn { height: 21px; }
.track { display: flex; flex-direction: column; justify-content: flex-end; flex: 1; background: #dadada; }
.thumb { height: 25%; background: #fff; border: 1px solid #c0c0c0; }
.notes { height: 46px; flex: none; margin-left: 2px; padding: 0 12px; border-top: 1px solid #c0c0c0; font-size: 18px; line-height: 38px; color: #444; }
.watermark { position: absolute; right: 387px; bottom: -1px; display: flex; flex-direction: column; align-items: center; color: #999; opacity: .22; pointer-events: none; }
.mark-ar { font: bold 64px/62px "DejaVu Sans Condensed", "DejaVu Sans", sans-serif; }
.mark-en { font: bold 33px/36px "Liberation Sans", sans-serif; }

/* Format Background pane */
.pane { display: flex; flex-direction: column; width: 356px; flex: none; margin: 3px 0 2px; padding: 4px 15px 19px 14px; border-left: 1px solid #c0c0c0; color: #444; }
.pane-head { display: flex; align-items: center; height: 42px; }
.pane-head h2 { font-size: 26px; font-weight: 300; line-height: 36px; color: #a4262c; white-space: nowrap; }
.pane-menu { margin: 0 0 4px auto; color: #666; }
.pane-close { margin: 0 7px 4px 38px; }
.pane-tab { width: 28px; margin: 11px 0 10px 6px; color: #d24726; --can: #fff; }
.pane-rule { display: flex; align-items: flex-end; }
.pane-rule i { width: 10px; border-bottom: 1px solid #c0c0c0; }
.pane-rule i:last-child { flex: 1; }
.pane h3 { display: flex; align-items: center; gap: 9px; margin: 6px 0 9px 8px; font-weight: 700; color: #d24726; }
.fill-form { padding: 0 24px 0 26px; }
.opt { display: flex; align-items: center; gap: 6px; height: 29px; }
.opt input { appearance: none; width: 16px; height: 16px; margin: 0; background: #fff; border: 1px solid #ababab; }
.opt input[type=radio] { border-radius: 50%; }
.opt input[type=radio]:checked { background: radial-gradient(circle, #666 3px, #fff 4px); }
.field { display: flex; align-items: center; height: 20px; padding-left: 10px; }
.color-field { justify-content: space-between; margin-top: 6px; border-top: 1px solid #ddd; height: 50px; }
.color-btn { display: flex; align-items: center; justify-content: center; gap: 6px; width: 51px; height: 31px; background: #fff; border: 1px solid #ababab; color: #666; --paint: #3f75b5; }
.color-btn span { border-bottom: 5px solid #966432; }
.field input[type=range] { width: 73px; margin: 0 6px 0 auto; }
input[type=range] { appearance: none; height: 16px; background: linear-gradient(#999, #999) center / 100% 1px no-repeat; }
input[type=range]::-webkit-slider-thumb { appearance: none; width: 5px; height: 13px; background: #666; }
#alpha { background: linear-gradient(#666, #666) 0 50% / 23% 2px no-repeat, linear-gradient(#999, #999) center / 100% 1px no-repeat; }
.spin { display: flex; width: 91px; height: 26px; flex: none; background: #fff; border: 1px solid #ababab; }
.spin input { flex: 1; min-width: 0; padding: 0 6px; border: 0; background: none; font-size: 12px; }
.spin > span { display: flex; flex-direction: column; width: 20px; }
.spin button { display: grid; place-items: center; flex: 1; }
.pane-actions { display: flex; gap: 12px; margin-top: auto; }
.pane-actions button { height: 30px; padding: 0 10px; background: #fff; border: 1px solid #ababab; }

/* Status bar */
.status { display: flex; align-items: center; flex: none; height: 24px; background: #f3f3f3; border-top: 1px solid #c0c0c0; font-size: 12px; padding-right: 7px; }
.language { margin: 0 auto 0 -4px; }
.status-text { display: flex; align-items: center; gap: 5px; }
.comments { margin: 0 21px; gap: 3px; }
.view { display: grid; place-items: center; width: 42px; height: 23px; }
.active { background: #c6c6c6; }
.view svg, .fit svg { fill: none; stroke: #666; }
.zoom-step { margin: 0 4px; }
.view + .zoom-step { margin-left: 6px; }
.zoom-step svg { stroke: #666; stroke-width: 2; }
.zoom { width: 125px; margin: 0; background: linear-gradient(#888, #888) 50% / 1px 8px no-repeat, linear-gradient(#999, #999) center / 100% 1px no-repeat; }
.percent { margin: 0 16px 0 9px; }
```
